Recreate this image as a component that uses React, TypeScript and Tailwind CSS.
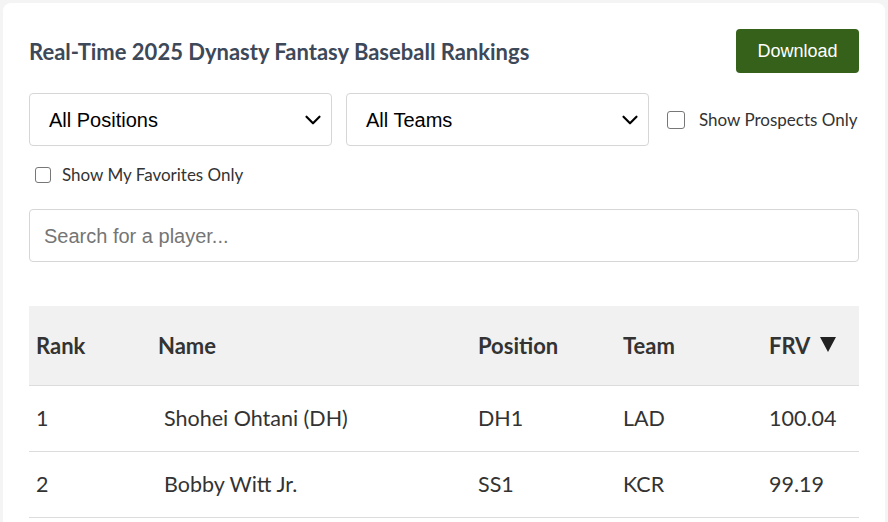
import { ChevronDown } from 'lucide-react';

const players = [
  { rank: 1, name: 'Shohei Ohtani (DH)', pos: 'DH1', team: 'LAD', frv: '100.04' },
  { rank: 2, name: 'Bobby Witt Jr.', pos: 'SS1', team: 'KCR', frv: '99.19' },
];

function Select({ label }: { label: string }) {
  return (
    <div className="w-[303px] h-[53px] shrink-0 flex items-center justify-between pl-[19px] pr-[5px] border border-[#d6d6d6] rounded-[4px] bg-white font-['Liberation_Sans',Arial,sans-serif] text-[20px] text-black">
      <span>{label}</span>
      <ChevronDown className="w-[26px] h-[26px] text-black" strokeWidth={2} />
    </div>
  );
}

export default function App() {
  return (
    <div className="h-screen bg-[#f4f4f4] pt-[3px] pl-[3px] overflow-hidden">
      <div className="w-[882px] h-[560px] bg-white rounded-[8px] px-[26px] pt-[26px] font-['Lato','Noto_Sans',sans-serif]">
        {/* Header */}
        <div className="flex items-center justify-between h-[44px]">
          <h2 className="text-[22px] font-bold text-[#3d4858]">
            Real-Time 2025 Dynasty Fantasy Baseball Rankings
          </h2>
          <button className="w-[123px] h-[44px] rounded-[4px] bg-[#35611a] text-white text-[18px] font-['Liberation_Sans',Arial,sans-serif]">
            Download
          </button>
        </div>

        {/* Filters */}
        <div className="flex items-center mt-[20px]">
          <Select label="All Positions" />
          <div className="ml-[14px]">
            <Select label="All Teams" />
          </div>
          <div className="w-[18px] h-[18px] shrink-0 ml-[18px] border-[1.5px] border-[#777] rounded-[3px]" />
          <span className="ml-[14px] whitespace-nowrap text-[17px] text-[#333]">Show Prospects Only</span>
        </div>

        <div className="flex items-center mt-[20px] ml-[6px] h-[17px]">
          <div className="w-[16px] h-[16px] border-[1.5px] border-[#777] rounded-[3px]" />
          <span className="ml-[11px] text-[17px] text-[#333]">Show My Favorites Only</span>
        </div>

        {/* Search */}
        <div className="mt-[26px] h-[53px] flex items-center px-[14px] border border-[#d6d6d6] rounded-[4px] font-['Liberation_Sans',Arial,sans-serif] text-[20px] text-[#757575]">
          Search for a player...
        </div>

        {/* Table */}
        <div className="mt-[44px] text-[21.5px] text-[#333]">
          <div className="flex items-center h-[80px] bg-[#f1f1f1] border-b border-[#dcdcdc] font-bold text-[22px]">
            <div className="w-[121px] pl-[7px]">Rank</div>
            <div className="w-[320px] pl-[8px]">Name</div>
            <div className="w-[145px] pl-[8px]">Position</div>
            <div className="w-[146px] pl-[8px]">Team</div>
            <div className="flex-1 pl-[8px] flex items-center gap-[10px]">
              FRV
              <svg width="16" height="16" viewBox="0 0 16 16" className="mb-[3px]">
                <path d="M0 1 H16 L8 16 Z" fill="#222" />
              </svg>
            </div>
          </div>
          {players.map((p) => (
            <div key={p.rank} className="flex items-center h-[66px] border-b border-[#dcdcdc]">
              <div className="w-[121px] pl-[7px]">{p.rank}</div>
              <div className="w-[320px] pl-[14px]">{p.name}</div>
              <div className="w-[145px] pl-[8px]">{p.pos}</div>
              <div className="w-[146px] pl-[8px]">{p.team}</div>
              <div className="flex-1 pl-[8px]">{p.frv}</div>
            </div>
          ))}
        </div>
      </div>
    </div>
  );
}
